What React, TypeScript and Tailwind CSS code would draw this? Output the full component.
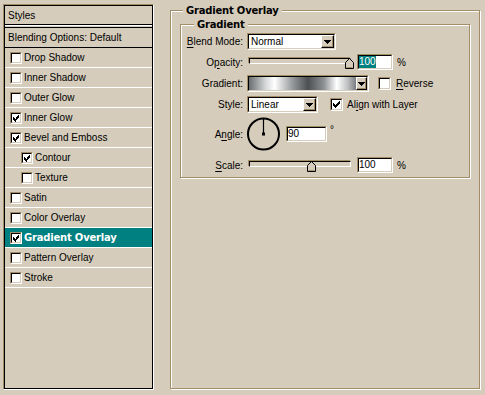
import React from 'react';

type Kids = { children?: React.ReactNode };

function Sunken({ className = '', innerClassName = '', children }: { className?: string; innerClassName?: string } & Kids) {
  return (
    <div className={`border border-t-[#a28d68] border-l-[#a28d68] border-r-white border-b-white ${className}`}>
      <div className={`h-full w-full border border-t-black border-l-black border-r-[#d5ccbb] border-b-[#d5ccbb] ${innerClassName}`}>
        {children}
      </div>
    </div>
  );
}

function CheckGlyph() {
  const cols = [2, 3, 4, 3, 2, 1, 0];
  return (
    <svg width="9" height="9" viewBox="0 0 9 9" shapeRendering="crispEdges">
      {cols.map((r, c) => (
        <rect key={c} x={c + 1} y={r + 1} width="1" height="3" fill="#000" />
      ))}
    </svg>
  );
}

function Checkbox({ checked, className = '' }: { checked?: boolean; className?: string }) {
  return (
    <Sunken className={`w-[13px] h-[13px] shrink-0 ${className}`} innerClassName="bg-white flex items-start justify-start">
      {checked ? <CheckGlyph /> : null}
    </Sunken>
  );
}

function DownTri() {
  return (
    <svg width="7" height="4" viewBox="0 0 7 4" shapeRendering="crispEdges">
      <rect x="0" y="0" width="7" height="1" fill="#000" />
      <rect x="1" y="1" width="5" height="1" fill="#000" />
      <rect x="2" y="2" width="3" height="1" fill="#000" />
      <rect x="3" y="3" width="1" height="1" fill="#000" />
    </svg>
  );
}

function ArrowButton({ className = '' }: { className?: string }) {
  return (
    <div
      className={`h-full shrink-0 bg-[#d5ccbb] border border-t-white border-l-white border-r-black border-b-black shadow-[inset_-1px_-1px_0_#a28d68] flex items-center justify-center ${className}`}
    >
      <DownTri />
    </div>
  );
}

function Select({ value, className = '' }: { value: string; className?: string }) {
  return (
    <Sunken className={`h-[17px] ${className}`} innerClassName="bg-white flex items-center">
      <span className="flex-1 pl-[2px] leading-[13px]">{value}</span>
      <ArrowButton className="w-[13px]" />
    </Sunken>
  );
}

function NumInput({ value, selected, className = '' }: { value: string; selected?: boolean; className?: string }) {
  return (
    <Sunken className={`h-[16px] ${className}`} innerClassName="bg-white flex items-center">
      <span className={`leading-[12px] ${selected ? 'bg-[#008080] text-white' : ''}`}>{value}</span>
    </Sunken>
  );
}

function Thumb({ className = '' }: { className?: string }) {
  return (
    <svg className={className} width="9" height="11" viewBox="0 0 9 11">
      <polygon points="4.5,0.5 8.5,4.5 8.5,10.5 0.5,10.5 0.5,4.5" fill="#d5ccbb" stroke="#000" strokeWidth="1" />
      <line x1="1.5" y1="9.5" x2="7.5" y2="9.5" stroke="#a28d68" strokeWidth="1" />
    </svg>
  );
}

function Slider({ thumbClass }: { thumbClass: string }) {
  return (
    <div className="relative w-[106px] h-[16px] ml-[4px] shrink-0">
      <div className="ml-[2px] mt-[4px] w-[102px] h-[6px] border border-t-black border-l-black border-r-white border-b-white shadow-[-1px_-1px_0_#a28d68] bg-[#d5ccbb]" />
      <Thumb className={thumbClass} />
    </div>
  );
}

function Label({ children }: Kids) {
  return <div className="w-[62px] shrink-0 text-right leading-[13px] whitespace-nowrap">{children}</div>;
}

function U({ children }: Kids) {
  return <span className="underline underline-offset-[2px] decoration-1">{children}</span>;
}

const items: { label: string; checked?: boolean; indent?: boolean; selected?: boolean }[] = [
  { label: 'Drop Shadow' },
  { label: 'Inner Shadow' },
  { label: 'Outer Glow' },
  { label: 'Inner Glow', checked: true },
  { label: 'Bevel and Emboss', checked: true },
  { label: 'Contour', checked: true, indent: true },
  { label: 'Texture', indent: true },
  { label: 'Satin' },
  { label: 'Color Overlay' },
  { label: 'Gradient Overlay', checked: true, selected: true },
  { label: 'Pattern Overlay' },
  { label: 'Stroke' },
];

const BOLD = "font-['DejaVu_Sans',sans-serif] font-bold text-[10px] tracking-[-0.2px]";

export default function App() {
  return (
    <div className="w-[485px] h-[395px] bg-[#d5ccbb] flex items-start font-['Liberation_Sans',Arial,sans-serif] text-[10px] text-black overflow-hidden">
      {/* Left styles list */}
      <div className="ml-[3px] mt-[4px] w-[151px] h-[386px] shrink-0 border border-t-[#a28d68] border-l-[#a28d68] border-r-white border-b-white">
        <div className="h-full border border-black flex flex-col">
          <div className="h-[19px] border-b border-black pl-[3px] flex items-center">Styles</div>
          <div className="h-[2px] border-t border-white bg-[#d5ccbb]" />
          <div className="h-[21px] border-t border-b border-black pl-[3px] flex items-center">Blending Options: Default</div>
          {items.map((it) => (
            <div
              key={it.label}
              className={`h-[20px] shrink-0 border-b border-white flex items-center ${it.indent ? 'pl-[16px]' : 'pl-[5px]'} ${
                it.selected ? 'bg-[#008080] text-white' : ''
              }`}
            >
              <Checkbox checked={it.checked} className="!w-[12px] !h-[12px]" />
              <span className={`ml-[2px] ${it.selected ? BOLD : ''}`}>{it.label}</span>
            </div>
          ))}
        </div>
      </div>

      {/* Right panel */}
      <div className="relative ml-[16px] mt-[10px] w-[310px] h-[379px] shrink-0 border border-[#a28d68] shadow-[inset_1px_1px_0_#fff,1px_1px_0_#fff]">
        <span className={`absolute left-[12px] top-[-7px] px-[3px] bg-[#d5ccbb] leading-[13px] ${BOLD}`}>Gradient Overlay</span>

        <div className="relative ml-[9px] mt-[13px] w-[290px] border border-[#a28d68] shadow-[inset_1px_1px_0_#fff,1px_1px_0_#fff] pt-[8px] pb-[4px]">
          <span className={`absolute left-[13px] top-[-7px] px-[3px] bg-[#d5ccbb] leading-[13px] ${BOLD}`}>Gradient</span>

          {/* Blend mode */}
          <div className="flex items-center h-[17px]">
            <Label>
              <U>B</U>lend Mode:
            </Label>
            <Select value="Normal" className="ml-[4px] w-[89px]" />
          </div>

          {/* Opacity */}
          <div className="flex items-center h-[16px] mt-[4px]">
            <Label>
              O<U>p</U>acity:
            </Label>
            <Slider thumbClass="absolute left-[98px] top-[4px]" />
            <NumInput value="100" selected className="ml-[4px] w-[36px]" />
            <span className="ml-[4px]">%</span>
          </div>

          {/* Gradient */}
          <div className="flex items-center h-[17px] mt-[5px]">
            <Label>Gradient:</Label>
            <Sunken className="ml-[4px] w-[122px] h-[17px]" innerClassName="flex bg-white">
              <div className="flex-1 h-full bg-[linear-gradient(90deg,#6a6e70_0%,#d8dadb_16%,#ffffff_24%,#9a9d9f_40%,#4c5052_55%,#8e9193_70%,#ffffff_82%,#c0c2c3_92%,#7a7d7f_100%)]" />
              <ArrowButton className="w-[11px]" />
            </Sunken>
            <Checkbox className="ml-[9px]" />
            <span className="ml-[5px]">
              <U>R</U>everse
            </span>
          </div>

          {/* Style */}
          <div className="flex items-center h-[17px] mt-[4px]">
            <Label>Style:</Label>
            <Select value="Linear" className="ml-[4px] w-[71px]" />
            <Checkbox checked className="ml-[12px]" />
            <span className="ml-[4px]">
              Al<U>i</U>gn with Layer
            </span>
          </div>

          {/* Angle */}
          <div className="flex items-center h-[34px] mt-[4px]">
            <Label>
              A<U>n</U>gle:
            </Label>
            <svg className="ml-[4px] shrink-0" width="33" height="34" viewBox="0 0 33 34">
              <circle cx="16.5" cy="17" r="15.5" fill="none" stroke="#000" strokeWidth="2" />
              <line x1="16.5" y1="17" x2="16.5" y2="2" stroke="#000" strokeWidth="1.2" />
              <rect x="15" y="15.5" width="3" height="3" fill="#000" />
            </svg>
            <NumInput value="90" className="ml-[6px] w-[41px]" />
            <span className="ml-[3px] self-start mt-[7px] leading-[11px]">°</span>
          </div>

          {/* Scale */}
          <div className="flex items-center h-[16px] mt-[6px]">
            <Label>
              <U>S</U>cale:
            </Label>
            <Slider thumbClass="absolute left-[60px] top-[4px]" />
            <NumInput value="100" className="ml-[4px] w-[36px]" />
            <span className="ml-[4px]">%</span>
          </div>
        </div>
      </div>
    </div>
  );
}
